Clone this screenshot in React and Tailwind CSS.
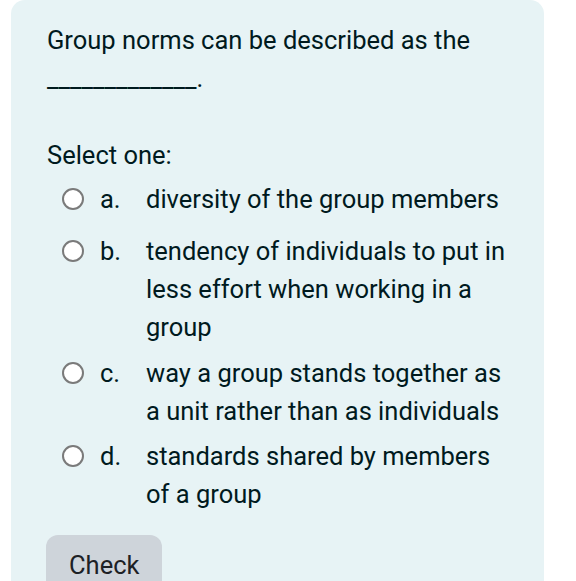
const options = [
  { letter: "a.", text: "diversity of the group members", mt: "mt-[6px]" },
  { letter: "b.", text: "tendency of individuals to put in less effort when working in a group", mt: "mt-[14px]" },
  { letter: "c.", text: "way a group stands together as a unit rather than as individuals", mt: "mt-[8px]" },
  { letter: "d.", text: "standards shared by members of a group", mt: "mt-[7px]" },
];

const App = () => {
  return (
    <div className="h-[581px] overflow-hidden bg-white font-['Roboto',sans-serif] text-[#001a1e]">
      <div className="ml-[11px] h-full w-[533px] rounded-t-[14px] bg-[#e7f3f5] pl-[36px] pr-[28px] pt-[21px] text-[25.5px] leading-[38px]">
        <p>Group norms can be described as the</p>
        <p>_____________.</p>

        <p className="mt-[39px]">Select one:</p>

        <div>
          {options.map((o) => (
            <label key={o.letter} className={`flex items-start ${o.mt}`}>
              <span className="ml-[15px] mt-[8px] h-[22px] w-[22px] shrink-0 rounded-full border-2 border-[#7a7a7a] bg-white" />
              <span className="ml-[16px] w-[46px] shrink-0">{o.letter}</span>
              <span className="flex-1">{o.text}</span>
            </label>
          ))}
        </div>

        <button
          type="button"
          className="ml-[-1px] mt-[22px] rounded-[12px] bg-[#ced4da] px-[23px] py-[11px] text-[#1d2125]"
        >
          Check
        </button>
      </div>
    </div>
  );
};

export default App;
